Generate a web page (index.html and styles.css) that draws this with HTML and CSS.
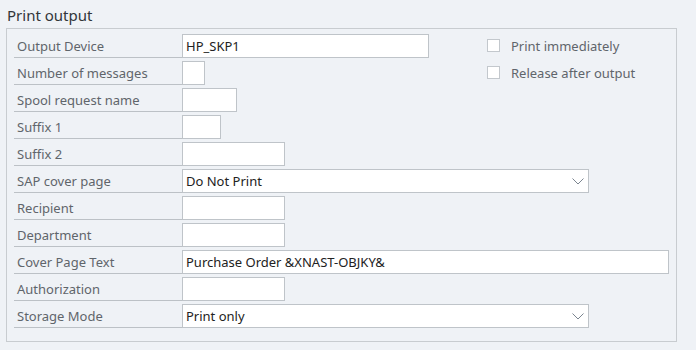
FILE: index.html
```html
<!DOCTYPE html>
<html lang="en">
<head>
    <meta charset="UTF-8">
    <title>Print output</title>
    <link rel="stylesheet" href="styles.css">
</head>
<body>
    <div class="title">Print output</div>
    <div class="group">
        <div class="row">
            <div class="label">Output Device</div>
            <div class="field-area">
                <div class="input w-long">HP_SKP1</div>
            </div>
            <label class="check"><span class="box"></span>Print immediately</label>
        </div>
        <div class="row">
            <div class="label">Number of messages</div>
            <div class="field-area">
                <div class="input w-xs"></div>
            </div>
            <label class="check"><span class="box"></span>Release after output</label>
        </div>
        <div class="row">
            <div class="label">Spool request name</div>
            <div class="input w-md"></div>
        </div>
        <div class="row">
            <div class="label">Suffix 1</div>
            <div class="input w-sm"></div>
        </div>
        <div class="row">
            <div class="label">Suffix 2</div>
            <div class="input w-lg"></div>
        </div>
        <div class="row">
            <div class="label">SAP cover page</div>
            <div class="input select">Do Not Print
                <svg class="chevron" width="12" height="7" viewBox="0 0 12 7"><path d="M0.5 0.5 L6 6 L11.5 0.5" fill="none" stroke="#7b8590" stroke-width="1"/></svg>
            </div>
        </div>
        <div class="row">
            <div class="label">Recipient</div>
            <div class="input w-lg"></div>
        </div>
        <div class="row">
            <div class="label">Department</div>
            <div class="input w-lg"></div>
        </div>
        <div class="row">
            <div class="label">Cover Page Text</div>
            <div class="input w-xl">Purchase Order &amp;XNAST-OBJKY&amp;</div>
        </div>
        <div class="row">
            <div class="label">Authorization</div>
            <div class="input w-lg"></div>
        </div>
        <div class="row">
            <div class="label">Storage Mode</div>
            <div class="input select">Print only
                <svg class="chevron" width="12" height="7" viewBox="0 0 12 7"><path d="M0.5 0.5 L6 6 L11.5 0.5" fill="none" stroke="#7b8590" stroke-width="1"/></svg>
            </div>
        </div>
    </div>
</body>
</html>
```

FILE: styles.css
```css
* {
    margin: 0;
    padding: 0;
    box-sizing: border-box;
}

body {
    background: #eff2f6;
    font-family: 'Noto Sans', 'Open Sans', sans-serif;
    font-size: 13px;
    color: #32363a;
    width: 696px;
    height: 350px;
    overflow: hidden;
}

.title {
    font-size: 15px;
    color: #32363a;
    padding: 6px 0 0 7px;
    height: 28px;
    line-height: 18px;
}

.group {
    margin-left: 6px;
    width: 671px;
    height: 314px;
    border: 1px solid #c8ccd0;
    padding: 5px 0 0 7px;
    display: flex;
    flex-direction: column;
    gap: 3px;
}

.row {
    display: flex;
    align-items: stretch;
    height: 24px;
}

.label {
    width: 168px;
    border-bottom: 1px solid #bcc1c6;
    color: #5f656b;
    padding-left: 3px;
    line-height: 24px;
}

.field-area {
    width: 305px;
}

.input {
    height: 24px;
    background: #ffffff;
    border: 1px solid #bfc4c9;
    padding-left: 3px;
    line-height: 22px;
    color: #222;
    white-space: nowrap;
}

.w-xs { width: 23px; }
.w-sm { width: 39px; }
.w-md { width: 55px; }
.w-lg { width: 103px; }
.w-long { width: 247px; }
.w-xl { width: 487px; }

.select {
    width: 407px;
    display: flex;
    justify-content: space-between;
    align-items: center;
    padding-right: 4px;
}

.chevron {
    margin-top: 1px;
}

.check {
    display: flex;
    align-items: center;
    gap: 11px;
    color: #5f656b;
    margin-top: -1px;
}

.box {
    width: 13px;
    height: 13px;
    background: #ffffff;
    border: 1px solid #c3c8cd;
}
```
